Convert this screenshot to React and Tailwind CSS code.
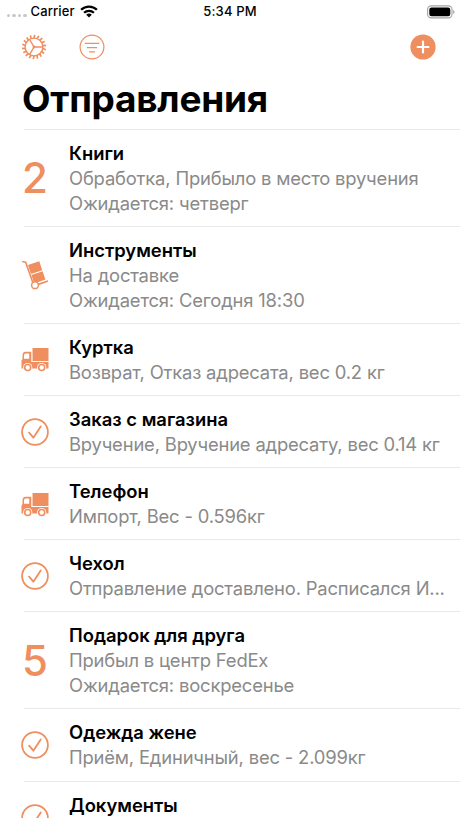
import React from 'react';
import clsx from 'clsx';

const shipments = [
  { title: 'Книги', icon: '2', lines: ['Обработка, Прибыло в место вручения', 'Ожидается: четверг'] },
  { title: 'Инструменты', icon: 'trolley', lines: ['На доставке', 'Ожидается: Сегодня 18:30'] },
  { title: 'Куртка', icon: 'truck', lines: ['Возврат, Отказ адресата, вес 0.2 кг'] },
  { title: 'Заказ с магазина', icon: 'check', lines: ['Вручение, Вручение адресату, вес 0.14 кг'] },
  { title: 'Телефон', icon: 'truck', lines: ['Импорт, Вес - 0.596кг'] },
  { title: 'Чехол', icon: 'check', lines: ['Отправление доставлено. Расписался И...'] },
  { title: 'Подарок для друга', icon: '5', lines: ['Прибыл в центр FedEx', 'Ожидается: воскресенье'] },
  { title: 'Одежда жене', icon: 'check', lines: ['Приём, Единичный, вес - 2.099кг'] },
  { title: 'Документы', icon: 'check', lines: [] },
];

const GearIcon = () => (
  <svg width="26" height="26" viewBox="0 0 26 26" fill="none" stroke="currentColor">
    <circle cx="13" cy="13" r="8.9" strokeWidth="1.4" />
    {Array.from({ length: 18 }, (_, i) => (
      <path key={i} d="M13 4.2L13.7 0.9" strokeWidth="1.7" transform={`rotate(${i * 20} 13 13)`} />
    ))}
    <path d="M13 13H21.8M13 13L8.6 5.4M13 13L8.6 20.6" strokeWidth="1.4" />
    <circle cx="13" cy="13" r="1.4" fill="currentColor" stroke="none" />
  </svg>
);

const FilterIcon = () => (
  <svg width="26" height="26" viewBox="0 0 26 26" fill="none" stroke="currentColor" strokeLinecap="round">
    <circle cx="13" cy="13" r="11.9" strokeWidth="1.2" />
    <path d="M6.2 9.3H19.8M8.3 13.6H17.7M10.5 17.8H15.5" strokeWidth="1.2" />
  </svg>
);

const AddIcon = () => (
  <svg width="26" height="26" viewBox="0 0 26 26">
    <circle cx="13" cy="13" r="12.6" fill="currentColor" />
    <path d="M13 7.6V18.4M7.6 13H18.4" stroke="white" strokeWidth="2.2" strokeLinecap="round" />
  </svg>
);

const WifiIcon = () => (
  <svg width="18" height="13" viewBox="0 0 18 13" fill="none" stroke="black" strokeWidth="2.3">
    <path d="M1.1 4.8A11.2 11.2 0 0 1 16.9 4.8" />
    <path d="M4.1 7.8A7 7 0 0 1 13.9 7.8" />
    <path d="M9 12.6L6.2 9.8A4 4 0 0 1 11.8 9.8Z" fill="black" stroke="none" />
  </svg>
);

const BatteryIcon = () => (
  <svg width="28" height="14" viewBox="0 0 28 14">
    <rect x="0.6" y="0.9" width="24.4" height="12" rx="3.6" fill="none" stroke="#a3a3a3" strokeWidth="1.1" />
    <rect x="2.3" y="2.6" width="21" height="8.6" rx="2.2" fill="black" />
    <path d="M26.2 5V9C27 8.6 27.5 7.9 27.5 7S27 5.4 26.2 5Z" fill="#a3a3a3" />
  </svg>
);

const TrolleyIcon = () => (
  <svg width="28" height="30" viewBox="0 0 28 30" fill="none" stroke="currentColor">
    <path d="M1.2 1.5L4.6 2.2L12 23" strokeWidth="1.6" />
    <path d="M7 5L18.3 1.3L21.2 10.2L10 13.9Z" fill="currentColor" stroke="none" />
    <path d="M10.4 15L21.6 11.3L24.4 19.6L16 22.6L12.8 22Z" fill="currentColor" stroke="none" />
    <path d="M16.5 24.6L27 21" strokeWidth="1.7" />
    <circle cx="14" cy="25.2" r="3.4" fill="white" strokeWidth="1.5" />
  </svg>
);

const TruckIcon = () => (
  <svg width="28" height="25" viewBox="0 0 28 25">
    <path d="M11.5 1H27.5V14H11.5Z" fill="currentColor" />
    <path
      fillRule="evenodd"
      d="M4.5 4.7H10.3V15H27.5V21.5H0.5V13.5L1.5 12V8.7C1.5 6 2.5 4.7 4.5 4.7ZM4.6 6.4C3.5 6.4 3 7.4 3 8.7V11.7H8.2V6.4Z"
      fill="currentColor"
    />
    <circle cx="6.7" cy="20.5" r="4.6" fill="white" />
    <circle cx="20.7" cy="20.5" r="4.6" fill="white" />
    <circle cx="6.7" cy="20.5" r="3" fill="none" stroke="currentColor" strokeWidth="1.6" />
    <circle cx="20.7" cy="20.5" r="3" fill="none" stroke="currentColor" strokeWidth="1.6" />
  </svg>
);

const CheckIcon = () => (
  <svg width="28" height="28" viewBox="0 0 28 28" fill="none" stroke="currentColor" strokeLinecap="round">
    <circle cx="14" cy="14" r="12.9" strokeWidth="1.8" />
    <path d="M8.1 14.7L12.4 19.7L19.7 8.5" strokeWidth="1.8" strokeLinejoin="round" />
  </svg>
);

const icons = { trolley: TrolleyIcon, truck: TruckIcon, check: CheckIcon };

const StatusIcon = ({ name }) => {
  const Icon = icons[name];
  if (Icon) return <Icon />;
  return <span className="text-[42px] leading-none font-[450]">{name}</span>;
};

const StatusBar = () => (
  <div className="grid h-[23px] grid-cols-3 items-center pl-[7px] pr-[5px] text-[13px] font-medium">
    <div className="flex items-center">
      <div className="mt-[8px] mr-[4px] flex gap-[2px]">
        {[0, 1, 2, 3].map((dot) => (
          <span key={dot} className="size-[3.4px] rounded-full bg-[#c8c8c8]" />
        ))}
      </div>
      <span className="mr-[5px] tracking-[0.1px]">Carrier</span>
      <WifiIcon />
    </div>
    <div className="pr-[2px] text-center tracking-[0.15px]">5:34 PM</div>
    <div className="flex justify-end">
      <BatteryIcon />
    </div>
  </div>
);

const ShipmentRow = ({ item }) => (
  <li className={clsx('flex pl-[21px]', item.lines.length > 1 ? 'h-[97px]' : 'h-[72.2px]')}>
    <div className="flex w-[28px] shrink-0 items-center justify-center pt-[2px] text-[#ef8e5e]">
      <StatusIcon name={item.icon} />
    </div>
    <div className="ml-[20px] min-w-0 flex-1 pt-[12px] text-[18.4px] leading-[25px] whitespace-nowrap">
      <h2 className="font-semibold">{item.title}</h2>
      {item.lines.map((line) => (
        <p key={line} className="tracking-[-0.17px] text-[#8a8a8a]">{line}</p>
      ))}
    </div>
  </li>
);

const App = () => {
  return (
    <div className="h-[818px] w-[460px] overflow-hidden bg-white font-['Inter','Liberation_Sans',sans-serif] text-black">
      <StatusBar />
      <header>
        <div className="flex h-[48px] items-center pl-[21px] pr-[24px] text-[#ef8e5e]">
          <button><GearIcon /></button>
          <button className="ml-[31.500px]"><FilterIcon /></button>
          <button className="ml-auto"><AddIcon /></button>
        </div>
        <h1 className="h-[57.6px] pl-[22px] text-[37px] leading-[55px] font-bold tracking-[-0.25px]">Отправления</h1>
      </header>
      <ul>
        {shipments.map((item) => (
          <React.Fragment key={item.title}>
            <li className="-mb-px ml-[24px] h-px bg-[#e9e9e9]" />
            <ShipmentRow item={item} />
          </React.Fragment>
        ))}
      </ul>
    </div>
  );
};

export default App;
